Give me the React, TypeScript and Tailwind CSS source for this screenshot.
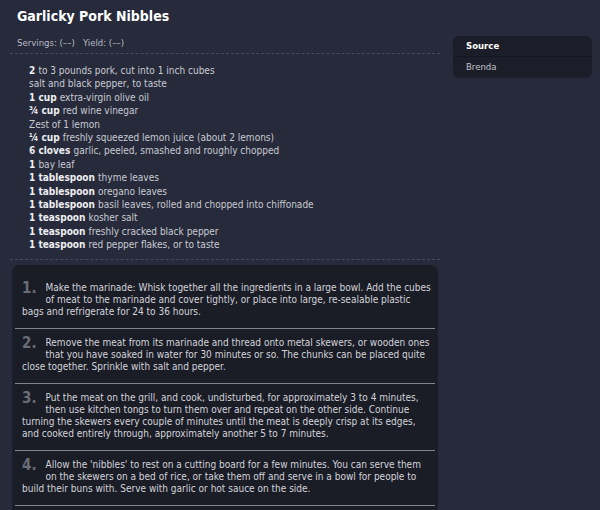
const INGREDIENTS: { qty?: string; text: string }[] = [
  { qty: "2", text: "to 3 pounds pork, cut into 1 inch cubes" },
  { text: "salt and black pepper, to taste" },
  { qty: "1 cup", text: "extra-virgin olive oil" },
  { qty: "¾ cup", text: "red wine vinegar" },
  { text: "Zest of 1 lemon" },
  { qty: "¼ cup", text: "freshly squeezed lemon juice (about 2 lemons)" },
  { qty: "6 cloves", text: "garlic, peeled, smashed and roughly chopped" },
  { qty: "1", text: "bay leaf" },
  { qty: "1 tablespoon", text: "thyme leaves" },
  { qty: "1 tablespoon", text: "oregano leaves" },
  { qty: "1 tablespoon", text: "basil leaves, rolled and chopped into chiffonade" },
  { qty: "1 teaspoon", text: "kosher salt" },
  { qty: "1 teaspoon", text: "freshly cracked black pepper" },
  { qty: "1 teaspoon", text: "red pepper flakes, or to taste" },
];

const STEPS = [
  "Make the marinade: Whisk together all the ingredients in a large bowl. Add the cubes of meat to the marinade and cover tightly, or place into large, re-sealable plastic bags and refrigerate for 24 to 36 hours.",
  "Remove the meat from its marinade and thread onto metal skewers, or wooden ones that you have soaked in water for 30 minutes or so. The chunks can be placed quite close together. Sprinkle with salt and pepper.",
  "Put the meat on the grill, and cook, undisturbed, for approximately 3 to 4 minutes, then use kitchen tongs to turn them over and repeat on the other side. Continue turning the skewers every couple of minutes until the meat is deeply crisp at its edges, and cooked entirely through, approximately another 5 to 7 minutes.",
  "Allow the 'nibbles' to rest on a cutting board for a few minutes. You can serve them on the skewers on a bed of rice, or take them off and serve in a bowl for people to build their buns with. Serve with garlic or hot sauce on the side.",
];

export default function App() {
  return (
    <div className="min-h-[510px] bg-[#262a3a] flex gap-[13px] pr-[8px] font-['DejaVu_Sans_Condensed','DejaVu_Sans',sans-serif] text-[#c9cad2] overflow-hidden">
      <div className="w-[440px] shrink-0 pl-[10px]">
        <h1 className="pl-[7px] pt-[7px] text-[14px] font-bold text-white leading-[18px]">Garlicky Pork Nibbles</h1>
        <div className="pl-[7px] mt-[12px] text-[9.5px] leading-[12px] text-[#b9bbc4]">
          Servings: (––)&nbsp;&nbsp; Yield: (––)
        </div>
        <div className="mt-[4px] border-t border-dashed border-[#444a60]" />

        <ul className="pl-[19px] pt-[10px] pb-[7px] text-[10px] leading-[13.4px]">
          {INGREDIENTS.map((ing, i) => (
            <li key={i}>
              {ing.qty && <span className="font-bold text-[#eeeef2]">{ing.qty} </span>}
              {ing.text}
            </li>
          ))}
        </ul>

        <div className="border-t border-dashed border-[#444a60]" />

        <div className="mt-[5px] mx-[2px] bg-[#1a1c26] rounded-t-[7px] pt-[9px] min-h-[260px]">
          <ol>
            {STEPS.map((step, i) => (
              <li key={i} className="mx-[3px] pl-[7px] pr-[1px] pt-[8px] pb-[10px] border-b border-[#80838c] text-[10px] leading-[12px] text-[#d3d4da]">
                <span className="float-left h-[20px] mr-[9px] text-[15px] leading-[12px] font-bold text-[#6a6d77]">{i + 1}.</span>
                {step}
              </li>
            ))}
          </ol>
        </div>
      </div>

      <div className="w-[139px] shrink-0 pt-[36px]">
        <div className="bg-[#1b1d28] rounded-[6px] text-[9.5px]">
          <div className="h-[21px] flex items-center px-[13px] font-bold text-white border-b border-[#14161e]">Source</div>
          <div className="h-[21px] flex items-center px-[13px] text-[#c3c4cc]">Brenda</div>
        </div>
      </div>
    </div>
  );
}
